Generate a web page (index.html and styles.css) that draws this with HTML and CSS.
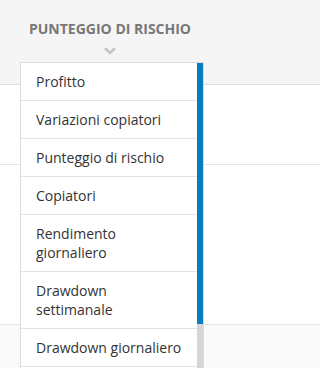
FILE: index.html
```html
<!DOCTYPE html>
<html lang="it">
<head>
<meta charset="utf-8">
<title>Punteggio di rischio</title>
<link rel="stylesheet" href="styles.css">
</head>
<body>
<div class="page">
  <div class="header">
    <div class="col-title">
      <div class="title">PUNTEGGIO DI RISCHIO</div>
      <svg class="chevron" width="12" height="8" viewBox="0 0 12 8"><polyline points="1,1.2 6,6 11,1.2" fill="none" stroke="#c4c4c4" stroke-width="2.6"/></svg>
    </div>
  </div>
  <div class="row row-a"></div>
  <div class="row row-b"></div>
  <div class="row row-c"></div>

  <div class="dropdown">
    <ul class="menu">
      <li>Profitto</li>
      <li>Variazioni copiatori</li>
      <li>Punteggio di rischio</li>
      <li>Copiatori</li>
      <li>Rendimento<br>giornaliero</li>
      <li>Drawdown<br>settimanale</li>
      <li>Drawdown giornaliero</li>
    </ul>
    <div class="scroll-track"><div class="scroll-thumb"></div></div>
  </div>
</div>
</body>
</html>
```
FILE: styles.css
```css
html, body {
  margin: 0;
  padding: 0;
  background: #ffffff;
  font-family: "Open Sans", "Liberation Sans", sans-serif;
}
.page {
  position: relative;
  height: 368px;
  overflow: hidden;
}
.header {
  height: 84px;
  background: #f5f5f5;
  border-bottom: 1px solid #e0e0e0;
  display: flex;
}
.col-title {
  width: 220px;
  display: flex;
  flex-direction: column;
  align-items: center;
  padding-top: 19px;
}
.title {
  font-size: 14px;
  font-weight: 700;
  color: #777777;
  line-height: 20px;
}
.chevron {
  display: block;
  margin-top: 8px;
}
.row {
  border-bottom: 1px solid #e6e6e6;
}
.row-a { height: 79px; }
.row-b { height: 159px; }
.row-c { height: 60px; background: #f9f9f9; }

.dropdown {
  position: absolute;
  left: 20px;
  top: 62px;
  width: 182px;
  height: 320px;
  background: #ffffff;
  border: 1px solid #dcdcdc;
  overflow: hidden;
}
.menu {
  list-style: none;
  margin: 0;
  padding: 0;
  width: 176px;
}
.menu li {
  padding: 9px 8px 9px 15px;
  line-height: 19px;
  font-size: 14px;
  color: #333333;
  border-bottom: 1px solid #e3e3e3;
}
.scroll-track {
  position: absolute;
  top: 0;
  right: 0;
  width: 6px;
  height: 100%;
  background: #d6d6d6;
}
.scroll-thumb {
  height: 261px;
  background: #0a7bbf;
}
```
